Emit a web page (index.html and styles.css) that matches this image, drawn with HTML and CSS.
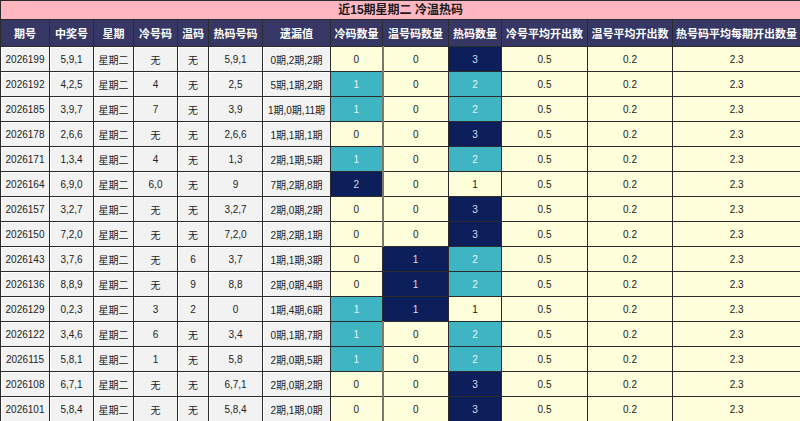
FILE: index.html
```html
<!DOCTYPE html>
<html>
<head>
<meta charset="utf-8">
<link rel="stylesheet" href="styles.css">
</head>
<body>
<table class="grid">
<colgroup>
<col class="w49"><col class="w44"><col class="w40"><col class="w44"><col class="w31"><col class="w54"><col class="w68"><col class="w52"><col class="w66"><col class="w53"><col class="w86"><col class="w85"><col class="w128">
</colgroup>
<thead>
<tr class="title"><th colspan="13">近15期星期二 冷温热码</th></tr>
<tr class="head">
<th>期号</th><th>中奖号</th><th>星期</th><th>冷号码</th><th>温码</th><th>热码号码</th><th>遗漏值</th><th>冷码数量</th><th>温号码数量</th><th>热码数量</th><th>冷号平均开出数</th><th>温号平均开出数</th><th>热号码平均每期开出数量</th>
</tr>
</thead>
<tbody>
<tr><td>2026199</td><td>5,9,1</td><td>星期二</td><td>无</td><td>无</td><td>5,9,1</td><td>0期,2期,2期</td><td class="y">0</td><td class="y sep">0</td><td class="n">3</td><td class="y">0.5</td><td class="y">0.2</td><td class="y">2.3</td></tr>
<tr><td>2026192</td><td>4,2,5</td><td>星期二</td><td>4</td><td>无</td><td>2,5</td><td>5期,1期,2期</td><td class="c">1</td><td class="y sep">0</td><td class="c">2</td><td class="y">0.5</td><td class="y">0.2</td><td class="y">2.3</td></tr>
<tr><td>2026185</td><td>3,9,7</td><td>星期二</td><td>7</td><td>无</td><td>3,9</td><td>1期,0期,11期</td><td class="c">1</td><td class="y sep">0</td><td class="c">2</td><td class="y">0.5</td><td class="y">0.2</td><td class="y">2.3</td></tr>
<tr><td>2026178</td><td>2,6,6</td><td>星期二</td><td>无</td><td>无</td><td>2,6,6</td><td>1期,1期,1期</td><td class="y">0</td><td class="y sep">0</td><td class="n">3</td><td class="y">0.5</td><td class="y">0.2</td><td class="y">2.3</td></tr>
<tr><td>2026171</td><td>1,3,4</td><td>星期二</td><td>4</td><td>无</td><td>1,3</td><td>2期,1期,5期</td><td class="c">1</td><td class="y sep">0</td><td class="c">2</td><td class="y">0.5</td><td class="y">0.2</td><td class="y">2.3</td></tr>
<tr><td>2026164</td><td>6,9,0</td><td>星期二</td><td>6,0</td><td>无</td><td>9</td><td>7期,2期,8期</td><td class="n">2</td><td class="y sep">0</td><td class="y">1</td><td class="y">0.5</td><td class="y">0.2</td><td class="y">2.3</td></tr>
<tr><td>2026157</td><td>3,2,7</td><td>星期二</td><td>无</td><td>无</td><td>3,2,7</td><td>2期,0期,2期</td><td class="y">0</td><td class="y sep">0</td><td class="n">3</td><td class="y">0.5</td><td class="y">0.2</td><td class="y">2.3</td></tr>
<tr><td>2026150</td><td>7,2,0</td><td>星期二</td><td>无</td><td>无</td><td>7,2,0</td><td>2期,2期,1期</td><td class="y">0</td><td class="y sep">0</td><td class="n">3</td><td class="y">0.5</td><td class="y">0.2</td><td class="y">2.3</td></tr>
<tr><td>2026143</td><td>3,7,6</td><td>星期二</td><td>无</td><td>6</td><td>3,7</td><td>1期,1期,3期</td><td class="y">0</td><td class="n">1</td><td class="c">2</td><td class="y">0.5</td><td class="y">0.2</td><td class="y">2.3</td></tr>
<tr><td>2026136</td><td>8,8,9</td><td>星期二</td><td>无</td><td>9</td><td>8,8</td><td>2期,0期,4期</td><td class="y">0</td><td class="n">1</td><td class="c">2</td><td class="y">0.5</td><td class="y">0.2</td><td class="y">2.3</td></tr>
<tr><td>2026129</td><td>0,2,3</td><td>星期二</td><td>3</td><td>2</td><td>0</td><td>1期,4期,6期</td><td class="c">1</td><td class="n">1</td><td class="y">1</td><td class="y">0.5</td><td class="y">0.2</td><td class="y">2.3</td></tr>
<tr><td>2026122</td><td>3,4,6</td><td>星期二</td><td>6</td><td>无</td><td>3,4</td><td>0期,1期,7期</td><td class="c">1</td><td class="y sep">0</td><td class="c">2</td><td class="y">0.5</td><td class="y">0.2</td><td class="y">2.3</td></tr>
<tr><td>2026115</td><td>5,8,1</td><td>星期二</td><td>1</td><td>无</td><td>5,8</td><td>2期,0期,5期</td><td class="c">1</td><td class="y sep">0</td><td class="c">2</td><td class="y">0.5</td><td class="y">0.2</td><td class="y">2.3</td></tr>
<tr><td>2026108</td><td>6,7,1</td><td>星期二</td><td>无</td><td>无</td><td>6,7,1</td><td>2期,0期,2期</td><td class="y">0</td><td class="y sep">0</td><td class="n">3</td><td class="y">0.5</td><td class="y">0.2</td><td class="y">2.3</td></tr>
<tr><td>2026101</td><td>5,8,4</td><td>星期二</td><td>无</td><td>无</td><td>5,8,4</td><td>2期,1期,0期</td><td class="y">0</td><td class="y sep">0</td><td class="n">3</td><td class="y">0.5</td><td class="y">0.2</td><td class="y">2.3</td></tr>
</tbody>
</table>
</body>
</html>
```
FILE: styles.css
```css
html, body {
  margin: 0;
  padding: 0;
  background: #ffffff;
}
.grid {
  width: 800px;
  table-layout: fixed;
  border-collapse: collapse;
  font-family: "Liberation Sans", "Noto Sans CJK SC", sans-serif;
  font-size: 10px;
  color: #222;
}
.w49 { width: 49px; }
.w44 { width: 44px; }
.w40 { width: 40px; }
.w31 { width: 31px; }
.w54 { width: 54px; }
.w68 { width: 68px; }
.w52 { width: 52px; }
.w66 { width: 66px; }
.w53 { width: 53px; }
.w86 { width: 86px; }
.w85 { width: 85px; }
.w128 { width: 128px; }
.grid th, .grid td {
  border: 1px solid #2b2b2b;
  padding: 0;
  text-align: center;
  white-space: nowrap;
  overflow: hidden;
}
.title th {
  height: 18px;
  background: #ffb6c1;
  font-size: 12px;
  font-weight: bold;
  color: #1a1a1a;
  line-height: 18px;
}
.head th {
  height: 26px;
  background: #363764;
  color: #ffffff;
  font-size: 11px;
  font-weight: bold;
}
.grid td {
  height: 24px;
  background: #f2f2f2;
  box-shadow: inset 1px 1px 0 #ffffff;
}
.grid td.y {
  background: #ffffdc;
  box-shadow: none;
}
.grid td.c {
  background: #3fb5c3;
  color: #e8f4f6;
  box-shadow: none;
}
.grid td.n {
  background: #0c1f5a;
  color: #d8dcec;
  box-shadow: none;
}
.grid td.sep {
  border-left: 2px solid #7a7a6a;
}
```
